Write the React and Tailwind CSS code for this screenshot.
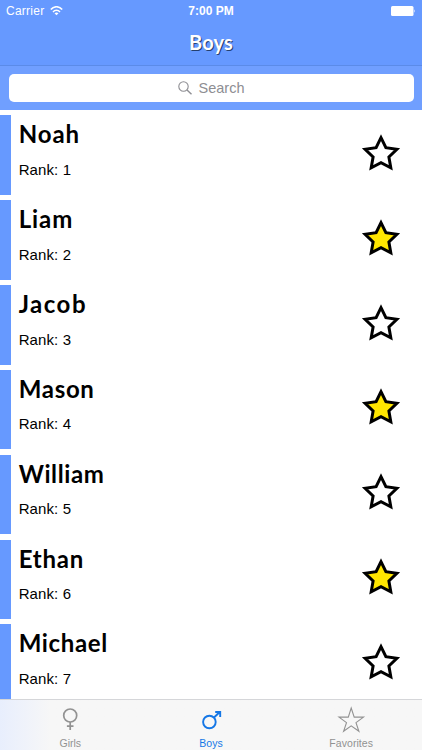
import React, { useState } from "react";

const initialNames = [
  { name: "Noah", favorite: false, tracking: "tracking-[0.9px]" },
  { name: "Liam", favorite: true, tracking: "tracking-[0.9px]" },
  { name: "Jacob", favorite: false, tracking: "tracking-[1.5px]" },
  { name: "Mason", favorite: true, tracking: "tracking-[0.7px]" },
  { name: "William", favorite: false, tracking: "tracking-[0.6px]" },
  { name: "Ethan", favorite: true, tracking: "tracking-[0.8px]" },
  { name: "Michael", favorite: false, tracking: "tracking-[0.65px]" },
];

const StarIcon = ({ filled }) => (
  <svg width="42" height="42" viewBox="-21 -21 42 42">
    <path
      d="M0-16.4 4.9-6.3 15.9-4.7 7.9 3 9.8 13.8 0 8.7-9.8 13.8-7.9 3-15.9-4.7-4.9-6.3Z"
      fill={filled ? "#ffe600" : "#fff"}
      stroke="#000"
      strokeWidth="3"
    />
  </svg>
);

const StatusBar = () => (
  <div className="flex h-[22px] items-center justify-between pl-[6px] pr-[6px] text-[12px] text-white">
    <div className="flex flex-1 items-center gap-[6px] tracking-[0.25px]">
      <span>Carrier</span>
      <svg width="13" height="10" viewBox="0 0 13 10" fill="none" stroke="#fff">
        <path d="M.8 3.6C4-.2 9-.2 12.2 3.6" strokeWidth="1.6" />
        <path d="M3 5.9c2-2.3 5-2.3 7 0" strokeWidth="1.5" />
        <path d="M6.5 9.2 4.5 7.2q2-1.5 4 0Z" fill="#fff" stroke="none" />
      </svg>
    </div>
    <span className="font-bold">7:00 PM</span>
    <div className="flex flex-1 justify-end">
      <svg width="25" height="10" viewBox="0 0 25 10" fill="#fff">
        <rect width="22.5" height="10" rx="1.5" />
        <path d="M23.3 3.3q1.5 1.7 0 3.4Z" />
      </svg>
    </div>
  </div>
);

const NameRow = ({ item, rank, onToggle }) => (
  <li className="flex h-[84.83px] items-start">
    <div className="mt-[5.4px] h-[79.5px] w-[10.7px] shrink-0 bg-[#6699ff]" />
    <div className="flex-1 pl-[8px]">
      <h2
        className={`mt-[9.4px] font-['Lato'] text-[24px] leading-[30px] font-bold ${item.tracking}`}
      >
        {item.name}
      </h2>
      <p className="mt-[10.6px] text-[15px] leading-[20px] tracking-[0.1px]">
        Rank: {rank}
      </p>
    </div>
    <button className="mt-[23px] mr-[20px]" onClick={onToggle}>
      <StarIcon filled={item.favorite} />
    </button>
  </li>
);

const TabBar = () => (
  <nav className="grid h-[51px] shrink-0 grid-cols-3 border-t border-[#d5d6d9] bg-[#f7f7f7] bg-linear-to-r from-[#e8eefd] to-[#f7f7f7] to-[12%] text-[10.5px] text-[#929292]">
    <div className="flex flex-col items-center">
      <svg
        className="h-[36px] w-[40px]"
        viewBox="0 0 40 36"
        fill="none"
        stroke="#929292"
        strokeWidth="1.7"
      >
        <circle cx="20.2" cy="15.5" r="6.5" />
        <path d="M20.2 22v8M16.9 26.2h6.6" />
      </svg>
      <span className="leading-[14px]">Girls</span>
    </div>
    <div className="flex flex-col items-center text-[#1577e6]">
      <svg
        className="h-[36px] w-[40px]"
        viewBox="0 0 40 36"
        fill="none"
        stroke="#1577e6"
        strokeWidth="1.9"
      >
        <circle cx="18.4" cy="22" r="6.3" />
        <path d="m23 17.5 6-5.7M24.2 12h5v5" />
      </svg>
      <span className="leading-[14px]">Boys</span>
    </div>
    <div className="flex flex-col items-center">
      <svg
        className="h-[36px] w-[40px]"
        viewBox="0 0 40 36"
        fill="none"
        stroke="#929292"
        strokeWidth="1.1"
      >
        <path d="M19.2 8 22.2 17.1H31.5L24 22.6 26.9 31.3 19.2 25.9 11.6 31.3 14.5 22.6 7 17.1H16.3Z" />
      </svg>
      <span className="-ml-px leading-[14px] tracking-[0.05px]">Favorites</span>
    </div>
  </nav>
);

const App = () => {
  const [names, setNames] = useState(initialNames);

  const toggleFavorite = (index) => {
    setNames(
      names.map((item, i) =>
        i === index ? { ...item, favorite: !item.favorite } : item
      )
    );
  };

  return (
    <div className="flex h-[750px] w-[422px] flex-col overflow-hidden bg-white font-['Liberation_Sans',sans-serif] text-black">
      <header className="h-[66px] shrink-0 border-b border-[#5b8be8] bg-[#6699ff]">
        <StatusBar />
        <h1 className="mt-[6px] text-center font-['Lato'] text-[20px] leading-[28px] font-bold tracking-[0.2px] text-white [text-shadow:1px_1px_0_#24406f]">
          Boys
        </h1>
      </header>
      <div className="h-[44px] shrink-0 bg-[#709fff] px-[8.5px] pt-[7.5px]">
        <div className="flex h-[28.5px] items-center justify-center gap-[7px] rounded-[5px] bg-white text-[14.5px] text-[#8e8e93]">
          <svg
            width="14"
            height="14"
            viewBox="0 0 14 14"
            fill="none"
            stroke="#8e8e93"
            strokeWidth="1.1"
          >
            <circle cx="5.5" cy="5.5" r="4.7" />
            <path d="m9 9 4.5 4.3" strokeWidth="1.4" />
          </svg>
          <span className="pt-[2px]">Search</span>
        </div>
      </div>
      <ul className="min-h-0 flex-1 overflow-hidden">
        {names.map((item, i) => (
          <NameRow
            key={item.name}
            item={item}
            rank={i + 1}
            onToggle={() => toggleFavorite(i)}
          />
        ))}
      </ul>
      <TabBar />
    </div>
  );
};

export default App;
